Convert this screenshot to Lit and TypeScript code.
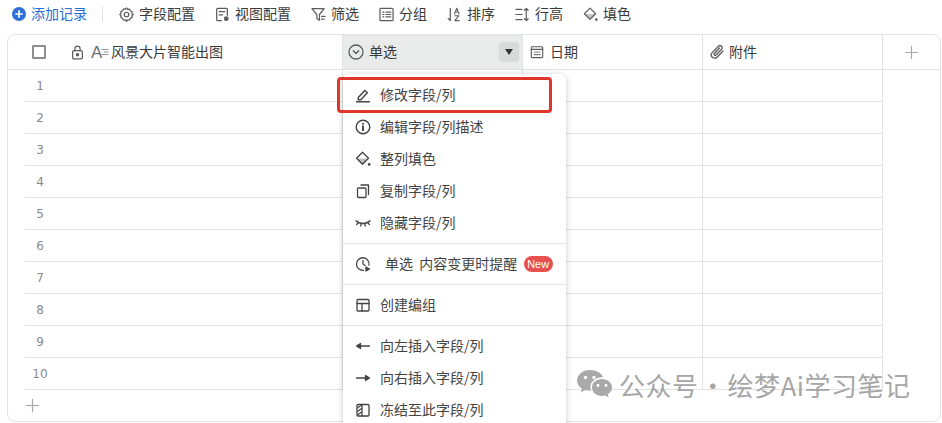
import { LitElement, html, css, svg } from "lit";
import { customElement } from "lit/decorators.js";

const ic = (w: number, body: unknown, cls = "") =>
  html`<svg class="ic ${cls}" width=${w} height=${w} viewBox="0 0 16 16" fill="none" stroke="currentColor" stroke-width="1.3" stroke-linecap="round" stroke-linejoin="round">${body}</svg>`;

const I = {
  gear: svg`<path d="M8 1l1.3 1.6 2-.3.9 1.9 1.9.9-.3 2L15.200 8l-1.400 1.100.3 2-1.900.9-.9 1.900-2-.3L8 15.200l-1.300-1.600-2 .3-.9-1.900-1.900-.9.3-2L.8 8l1.400-1.100-.3-2 1.900-.9.9-1.900 2 .3z"/><circle cx="8" cy="8" r="2.400"/>`,
  view: svg`<path d="M7 14.500H2.800a1 1 0 0 1-1-1V2.500a1 1 0 0 1 1-1h9.400a1 1 0 0 1 1 1V9"/><path d="M4.500 5h6M4.500 8.500h3.500"/><circle cx="12" cy="12.500" r="1.900" fill="currentColor"/>`,
  filter: svg`<path d="M1 1.800h13L9 8v6l-2.800-1.700V8z"/><path d="M11.300 10h3.700M11.300 13h2.700"/>`,
  group: svg`<rect x="1" y="1.500" width="14" height="13" rx="1"/><path d="M4 5.500h1.200M4 10.500h1.200M7.500 5.500h5M7.500 10.500h5M7.500 8h5M4 8h1.200"/>`,
  sort: svg`<path d="M3.500 1.500v13M3.500 14.500L1.300 12.300"/><path d="M8 7.300l2.400-6 2.400 6M8.900 5.300h3M8.300 9.300h4.400L8.300 14.500h4.600" stroke-width="1.200"/>`,
  height: svg`<path d="M1 2.500h6.500M1 8h6.500M1 13.500h6.500"/><path d="M12 1.500v13M10 3.500l2-2 2 2M10 12.500l2 2 2-2"/>`,
  fill: svg`<path d="M7.500 1.200l6 6-6 6-6-6z"/><path d="M1.800 7.400h11.400L7.500 13z" fill="currentColor" fill-opacity=".35" stroke="none"/><circle cx="14.200" cy="13.400" r="1.400" fill="currentColor" stroke="none"/>`,
  lock: svg`<rect x="2.800" y="6" width="10.400" height="8.800" rx="1.500"/><path d="M5.200 6V3.900a2.800 2.800 0 0 1 5.600 0V6"/><circle cx="8" cy="10.300" r="1.200" fill="currentColor"/>`,
  circle: svg`<circle cx="8" cy="8" r="7"/><path d="M5.300 6.800L8 9.500l2.700-2.700"/>`,
  cal: svg`<rect x="1.500" y="2" width="13" height="12.500" rx="1"/><path d="M1.500 5h13M5 8h1M7.600 8h1M10.200 8h1M5 11h1M7.600 11h1M10.200 11h1"/>`,
  clip: svg`<path d="M14 7l-6 6.200a3.300 3.300 0 0 1-4.800-4.600l6.200-6.400a2.200 2.200 0 0 1 3.200 3L7 11a1.100 1.100 0 0 1-1.600-1.500L10.500 4"/>`,
  pen: svg`<path d="M3.200 10.500L9.800 3.400l2.600 2.400-6.600 7H3.200z" stroke-width="1.400"/><path d="M1.500 14.800h13" stroke-width="1.400"/>`,
  info: svg`<circle cx="8" cy="8" r="6.800" stroke-width="1.400"/><path d="M8 7.300v4" stroke-width="1.900"/><circle cx="8" cy="4.800" r="1" fill="currentColor" stroke="none"/>`,
  copy: svg`<rect x="2.500" y="5" width="8.500" height="9.500" rx="1"/><path d="M6 2h7.500v9.500"/>`,
  eye: svg`<path d="M1 5.800c3.400 3.600 10.600 3.600 14 0M3 8L1.600 9.600M6.300 9l-.7 2M9.700 9l.7 2M13 8l1.400 1.600"/>`,
  clock: svg`<path d="M14 9a6.300 6.300 0 1 0-5.500 5.300"/><path d="M8 4.500V8l2 1.500"/><path d="M11 11l3.500 2-3.500 2z" fill="currentColor"/>`,
  layout: svg`<rect x="2" y="2.500" width="12" height="11.500" rx="1"/><path d="M2 6.500h12M7 6.500V14"/>`,
  left: svg`<path d="M3 8h11.500"/><path d="M1.500 8L5.500 5.500v5z" fill="currentColor"/>`,
  right: svg`<path d="M1.500 8H13"/><path d="M14.500 8L10.500 5.500v5z" fill="currentColor"/>`,
  freeze: svg`<rect x="2" y="2.500" width="12" height="11.500" rx="1"/><path d="M7 2.500V14"/><path d="M2.500 6L6.500 3M2.500 9.500L6.500 6.500M2.500 13L6.500 10" stroke-width="1.100"/>`,
  plus: svg`<path d="M8 1.500v13M1.500 8h13"/>`,
};

const tools: [unknown, string][] = [
  [I.gear, "字段配置"], [I.view, "视图配置"], [I.filter, "筛选"], [I.group, "分组"],
  [I.sort, "排序"], [I.height, "行高"], [I.fill, "填色"],
];

@customElement("app-root")
export class AppRoot extends LitElement {
  static styles = css`
    :host { display: block; position: relative; width: 942px; height: 423px; overflow: hidden; background: #fff;
      font-family: "Noto Sans CJK SC", "Liberation Sans", sans-serif; font-size: 14px; color: #3a3a3a; }
    .ic { display: block; flex: none; color: #5c5c5c; }
    .lab { margin-top: -2px; }
    .bar { display: flex; align-items: center; height: 28px; padding-left: 12px; gap: 20px; margin-bottom: 6px; }
    .t { display: flex; align-items: center; gap: 5px; line-height: 20px; white-space: nowrap; }
    .add { color: #2a6fd0; gap: 5px; }
    .dot { width: 14px; height: 14px; border-radius: 50%; background: #2f6fd6; display: flex; align-items: center; justify-content: center; }
    .dot .ic { color: #fff; }
    .sep { width: 1px; height: 16px; background: #e2e2e2; margin: 0 -4px 0 -5px; }
    .table { margin-left: 7px; width: 934px; height: 388px; box-sizing: border-box; border: 1px solid #e2e2e2; border-radius: 8px; overflow: hidden; }
    .head { display: flex; height: 35px; box-sizing: border-box; border-bottom: 1px solid #e2e2e2; }
    .hc { box-sizing: border-box; width: 180px; display: flex; align-items: center; padding-left: 7px; gap: 6px; border-right: 1px solid #e2e2e2; white-space: nowrap; }
    .hc.attach { padding-left: 6px; gap: 4px; }
    .hc.first { width: 335px; padding-left: 24px; gap: 0; }
    .cb { width: 14px; height: 14px; box-sizing: border-box; border: 2px solid #8f8f8f; border-radius: 1px; margin-right: 24px; }
    .fieldtype { display: flex; align-items: center; width: 18px; margin: 0 2px 0 6px; color: #6e6e6e; font: 17px/17px "Liberation Sans", sans-serif; }
    .fieldtype .ic { color: #8a8a8a; margin-left: -1px; }
    .sel { background: #e9ebea; gap: 5px; padding-left: 5px; padding-right: 3px; }
    .drop { margin-left: auto; width: 20px; height: 20px; border-radius: 4px; background: #d9dbda; display: flex; align-items: center; justify-content: center; }
    .caret { width: 0; height: 0; border-left: 4.500px solid transparent; border-right: 4.500px solid transparent; border-top: 6px solid #333; }
    .addc { flex: 1; display: flex; align-items: center; justify-content: center; }
    .addc .ic, .addrow .ic { color: #a8a8a8; }
    .row { display: flex; height: 32px; box-sizing: border-box; margin-left: 17px; width: 858px; border-bottom: 1px solid #e2e2e2; }
    .c { box-sizing: border-box; width: 180px; border-right: 1px solid #e2e2e2; }
    .c.n { width: 318px; }
    .num { width: 30px; text-align: center; font-family: "DejaVu Sans", sans-serif; font-size: 12px; line-height: 33px; color: #8a8a8a; }
    .addrow { height: 31px; padding-left: 17px; display: flex; align-items: center; }
    .menu { position: absolute; left: 343px; top: 74px; width: 223px; height: 380px; box-sizing: border-box; padding-top: 5px; background: #fff; border-radius: 6px; box-shadow: 0 1px 6px rgba(0,0,0,.22); }
    .mi { height: 32px; display: flex; align-items: center; padding-left: 12px; gap: 9px; white-space: nowrap; color: #444; line-height: 20px; }
    .mi .ic { color: #444; }
    .mi.wide { gap: 14px; word-spacing: 3px; }
    .d { height: 1px; background: #e4e4e4; margin: 4px 0; }
    .new { width: 29px; height: 16px; margin-left: -7.500px; border-radius: 8px; background: #e8504f; color: #fff; font: 11px/16px "Liberation Sans", sans-serif; text-align: center; word-spacing: 0; }
    .red { position: absolute; left: 337px; top: 77px; width: 215px; height: 36px; box-sizing: border-box; border: 3px solid #e0352b; border-radius: 4px; }
    .mark { position: absolute; left: 577px; top: 366px; display: flex; align-items: center; gap: 7px; color: #a6a6a6; font-size: 26px; letter-spacing: .5px; line-height: 32px; white-space: nowrap; pointer-events: none; }
    .mark svg { display: block; flex: none; }
    .marktext { margin-top: 3px; }
    .mdot { display: inline-block; width: 29px; text-align: center; }
  `;

  menuItem(icon: unknown, label: string) {
    return html`<div class="mi">${ic(16, icon)}<span class="lab">${label}</span></div>`;
  }

  render() {
    return html`
      <div class="bar">
        <div class="t add"><span class="dot">${ic(10, svg`<path d="M8 3v10M3 8h10" stroke-width="2.600"/>`)}</span><span class="lab">添加记录</span></div>
        <div class="sep"></div>
        ${tools.map(([i, l]) => html`<div class="t">${ic(15, i)}<span class="lab">${l}</span></div>`)}
      </div>
      <div class="table">
        <div class="head">
          <div class="hc first">
            <div class="cb"></div>
            ${ic(15, I.lock)}
            <span class="fieldtype">A${ic(8, svg`<path d="M2 3h12M6 8h8M2 13h12" stroke-width="1.800"/>`)}</span>
            <span class="lab">风景大片智能出图</span>
          </div>
          <div class="hc sel">${ic(16, I.circle)}<span class="lab">单选</span><span class="drop"><span class="caret"></span></span></div>
          <div class="hc">${ic(14, I.cal)}<span class="lab">日期</span></div>
          <div class="hc attach">${ic(16, I.clip)}<span class="lab">附件</span></div>
          <div class="addc">${ic(15, I.plus)}</div>
        </div>
        ${Array.from({ length: 10 }, (_, i) => html`
          <div class="row">
            <div class="c n"><div class="num">${i + 1}</div></div>
            <div class="c"></div><div class="c"></div><div class="c"></div>
          </div>`)}
        <div class="addrow">${ic(15, I.plus)}</div>
      </div>
      <div class="menu">
        ${this.menuItem(I.pen, "修改字段/列")}
        ${this.menuItem(I.info, "编辑字段/列描述")}
        ${this.menuItem(I.fill, "整列填色")}
        ${this.menuItem(I.copy, "复制字段/列")}
        ${this.menuItem(I.eye, "隐藏字段/列")}
        <div class="d"></div>
        <div class="mi wide">${ic(16, I.clock)}<span class="lab">单选 内容变更时提醒</span><span class="new">New</span></div>
        <div class="d"></div>
        ${this.menuItem(I.layout, "创建编组")}
        <div class="d"></div>
        ${this.menuItem(I.left, "向左插入字段/列")}
        ${this.menuItem(I.right, "向右插入字段/列")}
        ${this.menuItem(I.freeze, "冻结至此字段/列")}
      </div>
      <div class="red"></div>
      <div class="mark">
        <svg width="35" height="30" viewBox="0 0 35 30" fill="#a9a9a9">
          <path d="M13 1C6 1 0 5.700 0 11.500c0 3.300 1.900 6.100 4.900 8.100L3.700 23.500l4.500-2.400c1.500.4 3 .7 4.800.7h1c-.4-1.100-.6-2.300-.6-3.500 0-5.600 5.300-10 11.700-10h.9C24.600 4 19.300 1 13 1z"/>
          <path d="M35 18.500C35 13.500 30.200 10 25 10s-10 3.500-10 8.500 4.800 8.500 10 8.500c1.100 0 2.200-.2 3.200-.5l3.500 2-1-3.200c2.600-1.700 4.300-4 4.300-6.800z"/>
          <circle cx="8.500" cy="8.500" r="1.700" fill="#fff"/><circle cx="17" cy="8.500" r="1.700" fill="#fff"/>
          <circle cx="21" cy="16.500" r="1.400" fill="#fff"/><circle cx="29" cy="16.500" r="1.400" fill="#fff"/>
        </svg>
        <span class="marktext">公众号<span class="mdot">·</span>绘梦Ai学习笔记</span>
      </div>
    `;
  }
}
